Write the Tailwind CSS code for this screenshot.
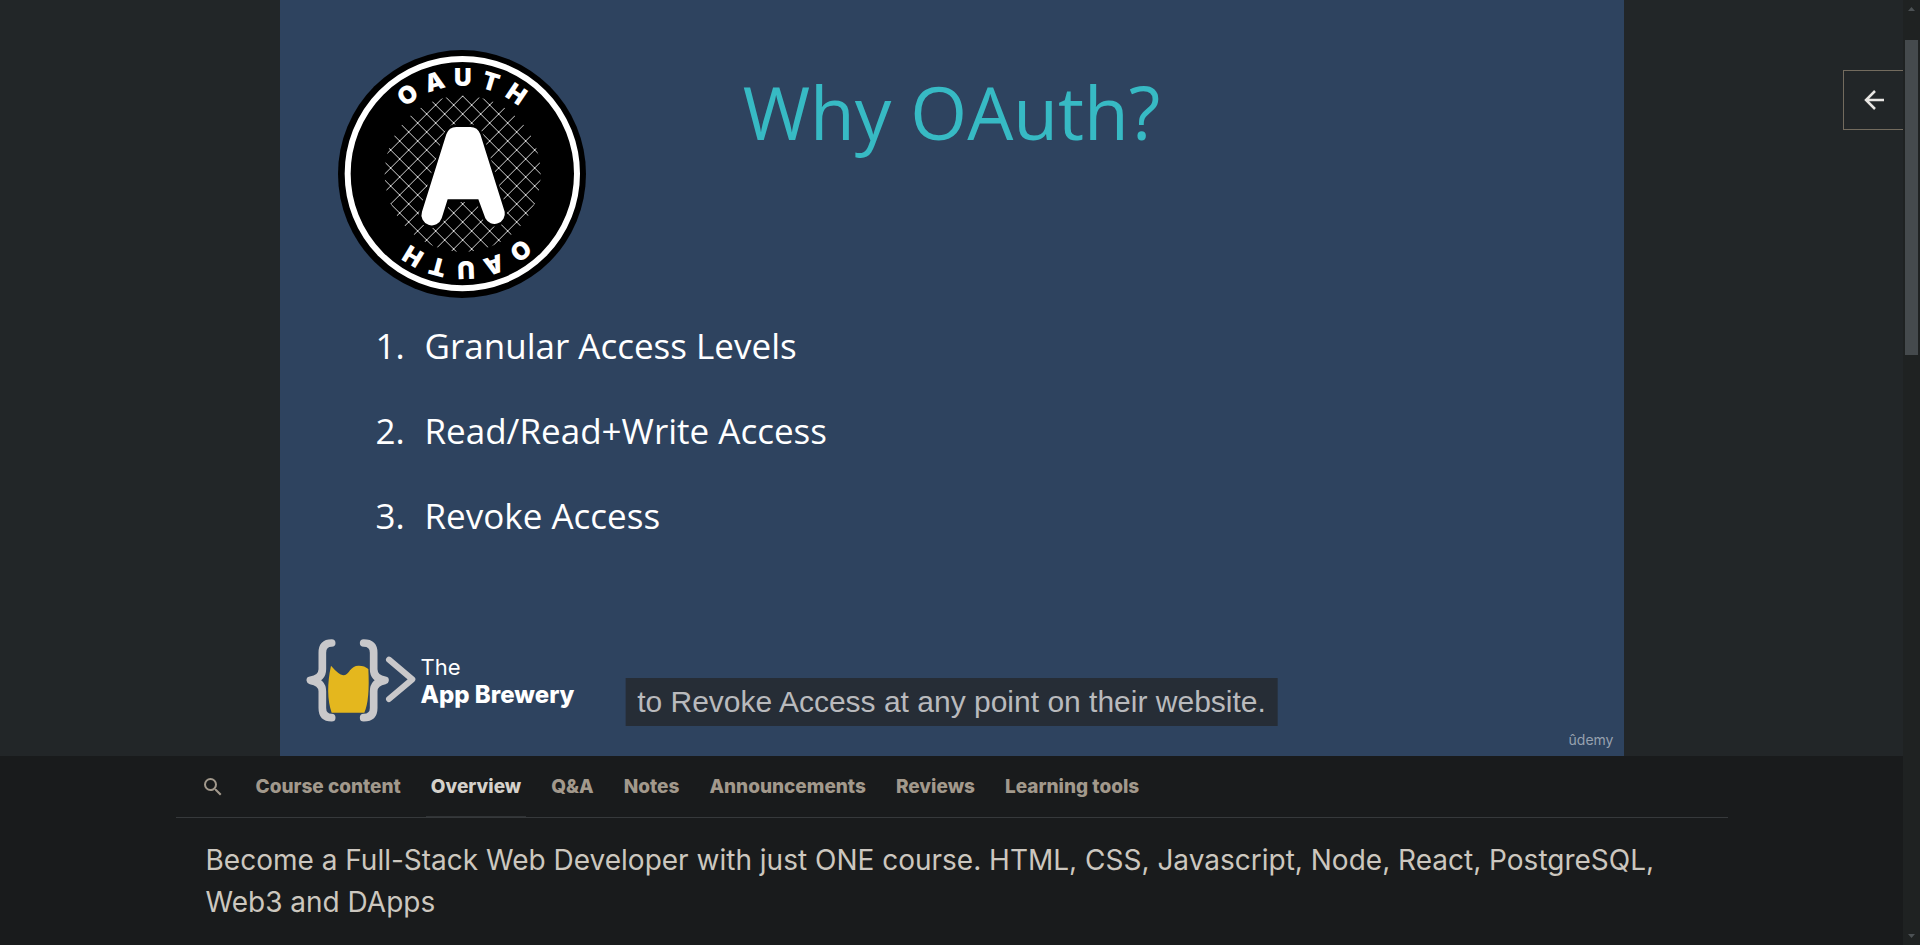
<!DOCTYPE html>
<html lang="en">
<head>
<meta charset="utf-8">
<meta name="viewport" content="width=device-width, initial-scale=1">
<title>Why OAuth? | Course player</title>
<script src="https://cdn.jsdelivr.net/npm/@tailwindcss/browser@4"></script>
</head>
<body class="flex h-screen overflow-hidden bg-[#191b1c] font-['Inter',sans-serif] text-[#ccc7bf]">
  <div class="flex min-w-0 flex-1 flex-col">
    <section class="relative flex shrink-0 justify-center bg-[#222628]" aria-label="Lecture video">
      <div class="relative flex aspect-video h-[80vh] flex-col bg-[#2e435f] font-['Open_Sans',sans-serif] text-white">
        <header class="grid grid-cols-[1fr_auto_1fr] items-start px-[58px] pt-[50px]">
          <svg class="size-[248px]" viewBox="54 60 744 744" role="img" aria-label="OAuth">
            <defs>
              <pattern id="mesh" x="428" y="198" width="54" height="54" patternUnits="userSpaceOnUse">
                <path d="M-2-2L56 56M56-2L-2 56" stroke="#d4d4d4" stroke-width="3"/>
              </pattern>
            </defs>
            <circle cx="426" cy="432" r="372"/>
            <circle cx="427" cy="431" r="344" fill="none" stroke="#fff" stroke-width="18"/>
            <circle cx="428" cy="431" r="234" fill="url(#mesh)"/>
            <path d="M409 291H451Q473 291 481 313L554 545A31 31 0 0 1 496 565L475 508H383L365 565A31 31 0 0 1 306 545L379 313Q387 291 409 291Z" fill="#fff" stroke="#000" stroke-width="16" paint-order="stroke"/>
            <g fill="#fff" font-family="Inter, sans-serif" font-weight="900" font-size="73" text-anchor="middle">
              <text transform="rotate(-35 428 431)" x="428" y="168">O</text>
              <text transform="rotate(-17 428 431)" x="428" y="168">A</text>
              <text x="428" y="168">U</text>
              <text transform="rotate(17 428 431)" x="428" y="168">T</text>
              <text transform="rotate(34 428 431)" x="428" y="168">H</text>
              <text transform="rotate(143 428 431)" x="428" y="168">O</text>
              <text transform="rotate(161 428 431)" x="428" y="168">A</text>
              <text transform="rotate(178 428 431)" x="428" y="168">U</text>
              <text transform="rotate(195 428 431)" x="428" y="168">T</text>
              <text transform="rotate(211 428 431)" x="428" y="168">H</text>
            </g>
          </svg>
          <h2 class="mt-[22px] text-[73px] leading-[80px] text-[#37bac4]">Why OAuth?</h2>
        </header>
        <ol class="mt-[30px] flex flex-col gap-[49px] pl-24 text-[35px] leading-[36px]">
          <li class="flex"><span class="w-[49px]">1.</span>Granular Access Levels</li>
          <li class="flex"><span class="w-[49px]">2.</span>Read/Read+Write Access</li>
          <li class="flex"><span class="w-[49px]">3.</span>Revoke Access</li>
        </ol>
        <div class="mt-auto flex items-center gap-[5px] pb-[34px] pl-[26px] font-['Inter',sans-serif]">
          <svg class="h-[84px] w-[110px]" viewBox="49 54 330 252" fill="none" stroke="#c9c8ca" stroke-linecap="round" stroke-linejoin="round" aria-hidden="true">
            <path d="M124 137Q146 163 161 166Q172 166 181 151Q192 136 208 137Q225 137 236 147Q241 240 224 278H126Q106 220 124 137Z" fill="#e4b71e" stroke="none"/>
            <path stroke-width="23" d="M126 69Q98 69 98 98V148Q98 176 62 181Q98 186 98 214V264Q98 293 126 293M222 69Q252 69 252 98V148Q252 176 286 181Q252 186 252 214V264Q252 293 222 293"/>
            <path stroke-width="18" d="M298 119L368 178L298 237"/>
          </svg>
          <p class="pt-0.5 leading-[27px]"><span class="block text-[22px]">The</span><span class="block text-[24px] font-extrabold">App Brewery</span></p>
        </div>
        <span class="absolute right-[10px] bottom-[6px] font-['Inter',sans-serif] text-[14px] leading-5 text-[#97a1af]">ûdemy</span>
      </div>
      <p class="absolute bottom-[30px] left-1/2 -translate-x-1/2 bg-[#262d36] px-3 font-['Liberation_Sans',sans-serif] text-[30px] leading-[48px] whitespace-nowrap text-[#b9babd]">to Revoke Access at any point on their website.</p>
      <button type="button" aria-label="Open course content" class="absolute top-[70px] right-0 flex h-[60px] w-[60px] items-center justify-center border border-r-0 border-[#736b5e] text-[#e8e6e3]">
        <svg class="size-5" viewBox="0 0 20 20" fill="none" stroke="currentColor" stroke-width="2.500" aria-hidden="true"><path d="M20 10H2M11 1L2 10L11 19"/></svg>
      </button>
    </section>

    <div class="mx-auto w-full max-w-[1552px]">
      <nav class="flex h-[62px] items-stretch border-b border-[#36393b] pl-[25px] text-[19px] font-extrabold text-[#a2998c]" aria-label="Course">
        <button type="button" aria-label="Search course content" class="mr-[26px] flex items-center">
          <svg class="size-6" viewBox="0 0 24 24" fill="currentColor" aria-hidden="true"><path d="M15.500 14h-.79l-.28-.27A6.471 6.471 0 0 0 16 9.500 6.500 6.500 0 1 0 9.500 16c1.610 0 3.090-.59 4.230-1.570l.27.28v.79l5 4.990L20.490 19l-4.990-5zm-6 0C7.010 14 5 11.990 5 9.500S7.010 5 9.500 5 14 7.010 14 9.500 11.990 14 9.500 14z"/></svg>
        </button>
        <div class="flex gap-5" role="tablist">
          <button type="button" role="tab" class="border-b border-transparent px-[5px] pt-0.5">Course content</button>
          <button type="button" role="tab" aria-selected="true" class="border-b border-[#303335] px-[5px] pt-0.5 text-[#d5d1cb]">Overview</button>
          <button type="button" role="tab" class="border-b border-transparent px-[5px] pt-0.5">Q&amp;A</button>
          <button type="button" role="tab" class="border-b border-transparent px-[5px] pt-0.5">Notes</button>
          <button type="button" role="tab" class="border-b border-transparent px-[5px] pt-0.5">Announcements</button>
          <button type="button" role="tab" class="border-b border-transparent px-[5px] pt-0.5">Reviews</button>
          <button type="button" role="tab" class="border-b border-transparent px-[5px] pt-0.5">Learning tools</button>
        </div>
      </nav>
      <h1 class="px-[30px] pt-[21px] text-[28px] leading-[42px]">Become a Full-Stack Web Developer with just ONE course. HTML, CSS, Javascript, Node, React, PostgreSQL, Web3 and DApps</h1>
    </div>
  </div>

  <div class="flex w-[17px] shrink-0 flex-col items-center bg-[#1f2222] text-[#4c5154]" aria-hidden="true">
    <svg class="mt-[7px] h-1 w-[7px]" viewBox="0 0 7 4" fill="currentColor"><path d="M0 4L3.500 0L7 4Z"/></svg>
    <div class="mt-[29px] h-1/3 w-[13px] bg-[#454a4d]"></div>
    <svg class="mt-auto mb-[7px] h-1 w-[7px]" viewBox="0 0 7 4" fill="currentColor"><path d="M0 0L3.500 4L7 0Z"/></svg>
  </div>
</body>
</html>
